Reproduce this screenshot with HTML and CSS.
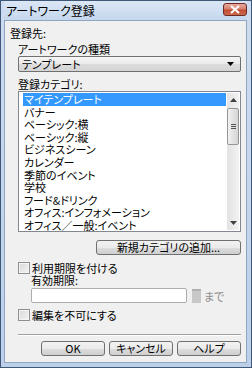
FILE: index.html
```html
<!DOCTYPE html>
<html lang="ja">
  <head>
    <meta charset="UTF-8">
    <title>アートワーク登録</title>
    <link rel="stylesheet" href="styles.css">
  </head>
  <body>
    <div class="window">
      <div class="titlebar">
        <span class="title">アートワーク登録</span>
        <span class="close">
          <svg width="12" height="9" viewBox="0 0 12 9"><path d="M2 1 L10 8 M10 1 L2 8" stroke="#fff" stroke-width="2.2"/></svg>
        </span>
      </div>
      <div class="client">
        <div class="label">登録先:</div>
        <div class="group">
          <div class="label">アートワークの種類</div>
          <div class="combo">
            <span>テンプレート</span>
            <svg width="7" height="4" viewBox="0 0 7 4"><path d="M0 0 H7 L3.5 4 Z" fill="#000"/></svg>
          </div>
          <div class="label cat-label">登録カテゴリ:</div>
          <div class="listbox">
            <ul class="items">
              <li class="selected">マイテンプレート</li>
              <li>バナー</li>
              <li>ベーシック:横</li>
              <li>ベーシック:縦</li>
              <li>ビジネスシーン</li>
              <li>カレンダー</li>
              <li>季節のイベント</li>
              <li>学校</li>
              <li>フード&amp;ドリンク</li>
              <li>オフィス:インフォメーション</li>
              <li>オフィス／一般:イベント</li>
            </ul>
            <div class="scrollbar">
              <div class="arrow">
                <svg width="7" height="4" viewBox="0 0 7 4"><path d="M0 4 H7 L3.5 0 Z" fill="#404040"/></svg>
              </div>
              <div class="track">
                <div class="thumb"><span class="grip"></span></div>
              </div>
              <div class="arrow">
                <svg width="7" height="4" viewBox="0 0 7 4"><path d="M0 0 H7 L3.5 4 Z" fill="#404040"/></svg>
              </div>
            </div>
          </div>
          <div class="add-row">
            <button class="btn add-btn">新規カテゴリの追加...</button>
          </div>
        </div>
        <label class="check first-check"><span class="box"></span>利用期限を付ける</label>
        <div class="expiry">
          <div class="label">有効期限:</div>
          <div class="date-row">
            <span class="date-input"></span>
            <span class="cal"></span>
            <span class="until">まで</span>
          </div>
        </div>
        <label class="check second-check"><span class="box"></span>編集を不可にする</label>
        <div class="sep"></div>
        <div class="footer">
          <button class="btn">OK</button>
          <button class="btn">キャンセル</button>
          <button class="btn">ヘルプ</button>
        </div>
      </div>
    </div>
  </body>
</html>
```

FILE: styles.css
```css
body {
  margin: 0;
  font-family: "Noto Sans CJK JP", "Noto Sans", sans-serif;
  font-size: 11px;
  font-feature-settings: "palt";
  color: #000;
}

.window {
  box-sizing: border-box;
  width: 252px;
  height: 368px;
  border: 1px solid #3f5878;
  background: linear-gradient(#cddcf0, #bcd0ea);
  padding: 0 4px 4px 3px;
  display: flex;
  flex-direction: column;
}

.titlebar {
  height: 19px;
  display: flex;
  align-items: center;
  justify-content: space-between;
  background: linear-gradient(#dbe7f6, #c5d7ee);
}

.title {
  font-size: 12px;
  padding-left: 2px;
  color: #000;
}

.close {
  width: 24px;
  height: 13px;
  margin-top: -3px;
  box-sizing: border-box;
  border: 1px solid #6e2a25;
  border-radius: 3px;
  background: linear-gradient(#e9a99c 0%, #d7826f 45%, #c14c32 55%, #cd6a4f 100%);
  display: flex;
  align-items: center;
  justify-content: center;
}

.client {
  flex: 1;
  background: #f0f0f0;
  border: 1px solid #8fa6c3;
  padding: 5px 5px 0 5px;
}

.label {
  height: 14px;
  line-height: 14px;
}

.group {
  padding-left: 8px;
  margin-top: 2px;
}

.combo {
  box-sizing: border-box;
  height: 16px;
  border: 1px solid #707070;
  border-radius: 2px;
  background: linear-gradient(#f6f6f6 0%, #e9e9e9 50%, #dcdcdc 51%, #d4d4d4 100%);
  display: flex;
  align-items: center;
  justify-content: space-between;
  padding: 0 6px 0 3px;
  line-height: 14px;
}

.cat-label {
  margin-top: 5px;
}

.listbox {
  box-sizing: border-box;
  height: 141px;
  border: 1px solid #828790;
  background: #fff;
  display: flex;
  padding: 1px 1px 0 4px;
}

.items {
  list-style: none;
  margin: 0;
  padding: 0;
  flex: 1;
}

.items li {
  height: 12.6px;
  line-height: 12.6px;
  padding-left: 1px;
  white-space: nowrap;
}

.items li.selected {
  background: #3399ff;
  color: #fff;
}

.scrollbar {
  width: 12px;
  margin: 0 0 1px 1px;
  background: linear-gradient(90deg, #e3e3e3, #f2f2f2);
  display: flex;
  flex-direction: column;
}

.arrow {
  height: 14px;
  display: flex;
  align-items: center;
  justify-content: center;
}

.track {
  flex: 1;
}

.thumb {
  box-sizing: border-box;
  height: 37px;
  margin-top: 1px;
  border: 1px solid #959595;
  border-radius: 2px;
  background: linear-gradient(90deg, #f3f3f3, #e2e2e2 50%, #d6d6d6);
  display: flex;
  align-items: center;
  justify-content: center;
}

.grip {
  width: 5px;
  height: 5px;
  background: repeating-linear-gradient(#555 0 1px, transparent 1px 2px);
}

.add-row {
  display: flex;
  justify-content: flex-end;
  margin-top: 8px;
}

.btn {
  box-sizing: border-box;
  height: 15px;
  padding: 0;
  border: 1px solid #707070;
  border-radius: 3px;
  background: linear-gradient(#f2f2f2 0%, #ebebeb 50%, #dddddd 51%, #cfcfcf 100%);
  font-family: inherit;
  font-size: 11px;
  font-feature-settings: "palt";
  line-height: 13px;
  color: #000;
}

.add-btn {
  width: 145px;
}

.check {
  display: flex;
  align-items: center;
  height: 12px;
  line-height: 12px;
  padding-left: 8px;
}

.first-check {
  margin-top: 7px;
}

.second-check {
  margin-top: 6px;
}

.box {
  box-sizing: border-box;
  width: 12px;
  height: 12px;
  margin-right: 2px;
  border: 1px solid #8e8f8f;
  background: linear-gradient(135deg, #d8d8d8, #f4f4f4);
  box-shadow: inset 0 0 0 1px #f4f4f4;
}

.expiry {
  padding-left: 21px;
}

.expiry .label {
  height: 12px;
  line-height: 12px;
}

.date-row {
  display: flex;
  align-items: center;
  margin-top: 2px;
  height: 15px;
}

.date-input {
  box-sizing: border-box;
  width: 156px;
  height: 15px;
  border: 1px solid #abadb3;
  border-radius: 2px;
  background: #fff;
}

.cal {
  width: 9px;
  height: 12px;
  margin-left: 5px;
  background: #c8c8c8;
  border-top: 2px solid #b0b0b0;
}

.until {
  margin-left: 3px;
  color: #8d8d8d;
}

.sep {
  margin: 13px 0 0 8px;
  height: 0;
  border-top: 1px solid #a0a0a0;
  border-bottom: 1px solid #fff;
}

.footer {
  display: flex;
  justify-content: flex-end;
  gap: 4px;
  margin-top: 5px;
}

.footer .btn {
  width: 64px;
}
```
